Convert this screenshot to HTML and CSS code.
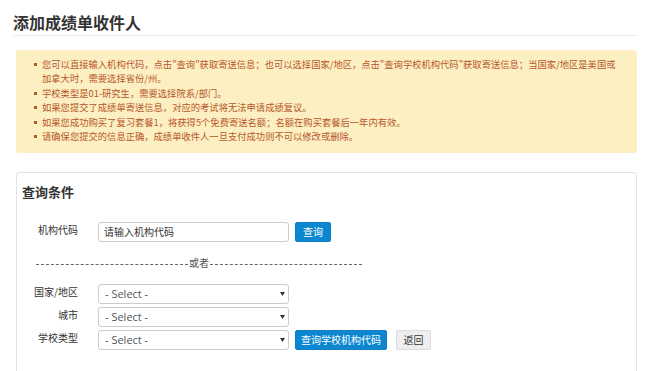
FILE: index.html
```html
<!DOCTYPE html>
<html lang="zh">
<head>
<meta charset="utf-8">
<title>添加成绩单收件人</title>
<link rel="stylesheet" href="styles.css">
</head>
<body>
<div class="page">
  <h1 class="page-title">添加成绩单收件人</h1>
  <div class="alert">
    <ul class="notes">
      <li>您可以直接输入机构代码，点击"查询"获取寄送信息；也可以选择国家/地区，点击"查询学校机构代码"获取寄送信息；当国家/地区是美国或加拿大时，需要选择省份/州。</li>
      <li>学校类型是01-研究生，需要选择院系/部门。</li>
      <li>如果您提交了成绩单寄送信息，对应的考试将无法申请成绩复议。</li>
      <li>如果您成功购买了复习套餐1，将获得5个免费寄送名额；名额在购买套餐后一年内有效。</li>
      <li>请确保您提交的信息正确，成绩单收件人一旦支付成功则不可以修改或删除。</li>
    </ul>
  </div>
  <div class="panel">
    <h2 class="panel-title">查询条件</h2>
    <div class="row row-code">
      <label class="label">机构代码</label>
      <div class="input">请输入机构代码</div>
      <button class="btn btn-primary btn-small">查询</button>
    </div>
    <div class="divider">
      <span class="dash"></span><span class="or">或者</span><span class="dash"></span>
    </div>
    <div class="row">
      <label class="label">国家/地区</label>
      <div class="select"><span>- Select -</span><svg width="5" height="4" viewBox="0 0 5 4"><path d="M0 0H5L2.5 4Z" fill="#333"/></svg></div>
    </div>
    <div class="row">
      <label class="label">城市</label>
      <div class="select"><span>- Select -</span><svg width="5" height="4" viewBox="0 0 5 4"><path d="M0 0H5L2.5 4Z" fill="#333"/></svg></div>
    </div>
    <div class="row">
      <label class="label">学校类型</label>
      <div class="select"><span>- Select -</span><svg width="5" height="4" viewBox="0 0 5 4"><path d="M0 0H5L2.5 4Z" fill="#333"/></svg></div>
      <button class="btn btn-primary btn-wide">查询学校机构代码</button>
      <button class="btn btn-default">返回</button>
    </div>
  </div>
</div>
</body>
</html>
```
FILE: styles.css
```css
* { box-sizing: border-box; }
body {
  margin: 0;
  background: #fff;
  font-family: "Noto Sans CJK SC", "Open Sans", sans-serif;
  color: #333;
}
.page {
  padding: 0 13px 0 16px;
}
.page-title {
  margin: 0 0 0 -3px;
  padding: 12px 0 3px 0;
  font-size: 16px;
  line-height: 20px;
  font-weight: bold;
  color: #333;
  border-bottom: 1px solid #eee;
}
.alert {
  margin-top: 14px;
  background: #fcf0c2;
  border-radius: 3px;
  padding: 7px 20px 10px 26px;
  color: #b8552c;
  font-size: 9.3px;
  line-height: 14.4px;
}
.notes {
  margin: 0;
  padding: 0;
  list-style: none;
}
.notes li {
  position: relative;
}
.notes li::before {
  content: "";
  position: absolute;
  left: -8px;
  top: 6px;
  width: 3px;
  height: 3px;
  background: #b8552c;
}
.panel {
  margin-top: 19px;
  border: 1px solid #e3e3e3;
  border-radius: 3px;
  height: 220px;
  padding: 9px 0 0 0;
}
.panel-title {
  margin: 0 0 20px 5px;
  font-size: 13px;
  line-height: 20px;
  font-weight: bold;
  color: #333;
}
.row {
  display: flex;
  align-items: center;
  height: 20px;
  margin-bottom: 3px;
}
.row-code { margin-bottom: 0; }
.label {
  width: 61px;
  text-align: right;
  font-size: 10px;
  color: #333;
  margin-right: 20px;
  line-height: 14px;
  position: relative;
  top: -2px;
}
.input, .select {
  width: 191px;
  height: 20px;
  border: 1px solid #ccc;
  border-radius: 3px;
  font-size: 10px;
  line-height: 18px;
  padding: 0 3px 0 5px;
}
.input { color: #333; }
.select {
  display: flex;
  align-items: center;
  justify-content: space-between;
  font-family: "Open Sans", "Noto Sans CJK SC", sans-serif;
  font-size: 11px;
  color: #555;
}
.select span { padding-left: 1px; }
.btn {
  height: 20px;
  border-radius: 2px;
  font-family: "Noto Sans CJK SC", sans-serif;
  font-size: 10px;
  line-height: 18px;
  padding: 0;
  margin-left: 6px;
  cursor: pointer;
}
.btn-primary {
  background: #0b87d2;
  border: 1px solid #0a7fc5;
  color: #fff;
}
.btn-small { width: 36px; }
.btn-wide { width: 92px; }
.btn-default {
  width: 35px;
  margin-left: 9px;
  background: #eee;
  border: 1px solid #ddd;
  color: #333;
}
.divider {
  display: flex;
  align-items: center;
  width: 326px;
  margin: 13px 0 13px 19px;
  height: 16px;
}
.dash {
  flex: 1;
  border-top: 1px dashed #666;
  margin-top: 2px;
}
.or {
  font-size: 10px;
  color: #555;
  padding: 0 1px;
  line-height: 14px;
}
```
